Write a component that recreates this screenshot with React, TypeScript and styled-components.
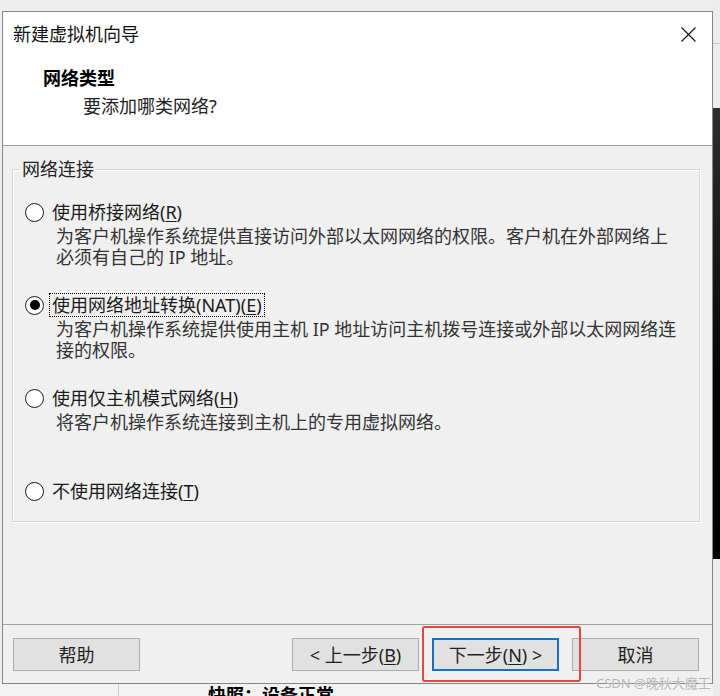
import React from "react";
import styled, { createGlobalStyle } from "styled-components";

const GlobalStyle = createGlobalStyle`
  html, body {
    margin: 0;
    padding: 0;
    width: 720px;
    height: 696px;
    overflow: hidden;
    background: #eeeeee;
  }
  body {
    font-family: "Noto Sans", "Noto Sans CJK SC", sans-serif;
    color: #1f1f1f;
  }
`;

const Page = styled.div`
  position: relative;
  width: 720px;
  height: 696px;
  overflow: hidden;
  display: flex;
  background: #eeeeee;
`;

const Stage = styled.div`
  width: 713px;
  height: 696px;
  display: flex;
  flex-direction: column;
  padding: 11px 0 0 2px;
  box-sizing: border-box;
  overflow: hidden;
`;

const Window = styled.div`
  flex: none;
  width: 711px;
  height: 673px;
  box-sizing: border-box;
  border: 1px solid #868686;
  display: flex;
  flex-direction: column;
  background: #f0f0f0;
`;

const Header = styled.div`
  flex: none;
  height: 134px;
  box-sizing: border-box;
  background: #ffffff;
  border-bottom: 1px solid #a0a0a0;
  display: flex;
  flex-direction: column;
`;

const TitleBar = styled.div`
  height: 44px;
  display: flex;
  align-items: center;
  justify-content: space-between;
  padding: 0 16px 0 10px;
`;

const TitleText = styled.span`
  font-size: 18px;
  line-height: 24px;
  color: #111;
`;

const CloseIcon = styled.svg`
  width: 15px;
  height: 15px;
  display: block;
`;

const StepTitle = styled.div`
  margin-top: 10px;
  padding-left: 40px;
  font-size: 18px;
  line-height: 24px;
  font-weight: 700;
  color: #000;
`;

const StepSubtitle = styled.div`
  margin-top: 4px;
  padding-left: 80px;
  font-size: 18px;
  line-height: 24px;
  color: #222;
`;

const Body = styled.div`
  flex: 1;
  min-height: 0;
  padding: 11px 12px 0 9px;
  background: #f0f0f0;
`;

const GroupBox = styled.fieldset`
  margin: 0;
  padding: 19px 0 18px 12px;
  border: 1px solid #d6d6d6;
  box-shadow: inset 1px 1px 0 #ffffff, 1px 1px 0 #ffffff;
  min-width: 0;
`;

const Legend = styled.legend`
  margin-left: -5px;
  padding: 0 2px;
  font-size: 18px;
  line-height: 24px;
  color: #222;
`;

const Option = styled.div<{ $last?: boolean }>`
  height: ${(p) => (p.$last ? "24px" : "93px")};
  display: flex;
  flex-direction: column;
`;

const OptionRow = styled.div`
  height: 24px;
  display: flex;
  align-items: center;
  gap: 5px;
`;

const Radio = styled.span<{ $checked?: boolean }>`
  width: 19px;
  height: 19px;
  box-sizing: border-box;
  border-radius: 50%;
  border: 1px solid #1c1c1c;
  background: #ffffff;
  display: flex;
  align-items: center;
  justify-content: center;
  &::after {
    content: "";
    width: 10px;
    height: 10px;
    border-radius: 50%;
    background: ${(p) => (p.$checked ? "#000" : "transparent")};
  }
`;

const Label = styled.span<{ $focused?: boolean }>`
  border: 1px ${(p) => (p.$focused ? "dotted #000" : "solid transparent")};
  padding: 0 2px;
  font-size: 18px;
  line-height: 22px;
  color: #1a1a1a;
  white-space: nowrap;
`;

const Mnemonic = styled.u`
  text-decoration: underline;
  text-underline-offset: 2px;
  text-decoration-thickness: 1px;
`;

const Desc = styled.div`
  margin-top: 2px;
  padding-left: 31px;
  display: flex;
  flex-direction: column;
`;

const DescLine = styled.span`
  font-size: 18px;
  line-height: 21px;
  color: #333;
  white-space: nowrap;
`;

const Footer = styled.div`
  flex: none;
  height: 59px;
  box-sizing: border-box;
  border-top: 1px solid #a0a0a0;
  padding: 13px 13px 0 10px;
  display: flex;
  justify-content: space-between;
  align-items: flex-start;
  background: #f0f0f0;
`;

const ButtonGroup = styled.div`
  display: flex;
  gap: 13px;
`;

const Button = styled.button<{ $primary?: boolean }>`
  width: 127px;
  height: 33px;
  box-sizing: border-box;
  margin: 0;
  padding: 0;
  background: #e1e1e1;
  border: ${(p) => (p.$primary ? "2px solid #1b6fc2" : "1px solid #adadad")};
  font-family: "Noto Sans", "Noto Sans CJK SC", sans-serif;
  font-size: 18px;
  line-height: 24px;
  color: #1f1f1f;
  display: flex;
  align-items: center;
  justify-content: center;
  white-space: nowrap;
`;

const Highlight = styled.span`
  position: relative;
  display: flex;
`;

const HighlightFrame = styled.span`
  position: absolute;
  left: -10px;
  top: -12px;
  right: -22px;
  bottom: -11px;
  border: 2px solid #e8463b;
  border-radius: 3px;
  pointer-events: none;
`;

const BottomBar = styled.div`
  flex: 1;
  min-height: 0;
  display: flex;
  margin-left: -2px;
  background: #f3f3f3;
`;

const BottomCell = styled.div`
  width: 119px;
  box-sizing: border-box;
  border-right: 1px solid #cfcfcf;
`;

const BottomText = styled.div`
  padding-left: 89px;
  margin-top: -1px;
  font-size: 18px;
  line-height: 24px;
  font-weight: 700;
  color: #000;
  white-space: nowrap;
`;

const Strip = styled.div`
  width: 7px;
  display: flex;
  flex-direction: column;
`;

const StripPart = styled.div<{ $h?: number; $dark?: boolean; $line?: boolean }>`
  height: ${(p) => (p.$h ? `${p.$h}px` : "auto")};
  flex: ${(p) => (p.$h ? "none" : "1")};
  background: ${(p) =>
    p.$dark ? "linear-gradient(#2e2e2e 0%, #1a1a1a 30%, #050505 60%, #000 100%)" : "#ececec"};
  border-bottom: ${(p) => (p.$line ? "1px solid #c8c8c8" : "none")};
`;

const Watermark = styled.div`
  position: absolute;
  left: 596px;
  top: 674px;
  font-family: "Noto Sans", "Noto Sans CJK SC", sans-serif;
  font-size: 13px;
  line-height: 18px;
  color: #b4b4b4;
  text-shadow: 0 0 1px #ffffff;
  white-space: nowrap;
  pointer-events: none;
`;

type Opt = {
  label: string;
  key: string;
  tail?: string;
  desc: string[];
  checked?: boolean;
};

const options: Opt[] = [
  {
    label: "使用桥接网络(",
    key: "R",
    tail: ")",
    desc: [
      "为客户机操作系统提供直接访问外部以太网网络的权限。客户机在外部网络上",
      "必须有自己的 IP 地址。",
    ],
  },
  {
    label: "使用网络地址转换(NAT)(",
    key: "E",
    tail: ")",
    desc: [
      "为客户机操作系统提供使用主机 IP 地址访问主机拨号连接或外部以太网网络连",
      "接的权限。",
    ],
    checked: true,
  },
  {
    label: "使用仅主机模式网络(",
    key: "H",
    tail: ")",
    desc: ["将客户机操作系统连接到主机上的专用虚拟网络。"],
  },
  {
    label: "不使用网络连接(",
    key: "T",
    tail: ")",
    desc: [],
  },
];

export default function App() {
  return (
    <>
      <GlobalStyle />
      <Page>
        <Stage>
          <Window>
            <Header>
              <TitleBar>
                <TitleText>新建虚拟机向导</TitleText>
                <CloseIcon viewBox="0 0 15 15">
                  <path d="M0.5 0.5 L14.5 14.5 M14.5 0.5 L0.5 14.5" stroke="#111" strokeWidth="1.1" fill="none" />
                </CloseIcon>
              </TitleBar>
              <StepTitle>网络类型</StepTitle>
              <StepSubtitle>要添加哪类网络?</StepSubtitle>
            </Header>
            <Body>
              <GroupBox>
                <Legend>网络连接</Legend>
                {options.map((o, i) => (
                  <Option key={o.key} $last={i === options.length - 1}>
                    <OptionRow>
                      <Radio $checked={o.checked} />
                      <Label $focused={o.checked}>
                        {o.label}
                        <Mnemonic>{o.key}</Mnemonic>
                        {o.tail}
                      </Label>
                    </OptionRow>
                    {o.desc.length > 0 && (
                      <Desc>
                        {o.desc.map((d) => (
                          <DescLine key={d}>{d}</DescLine>
                        ))}
                      </Desc>
                    )}
                  </Option>
                ))}
              </GroupBox>
            </Body>
            <Footer>
              <Button>帮助</Button>
              <ButtonGroup>
                <Button>
                  &lt; 上一步(<Mnemonic>B</Mnemonic>)
                </Button>
                <Highlight>
                  <Button $primary>
                    下一步(<Mnemonic>N</Mnemonic>) &gt;
                  </Button>
                  <HighlightFrame />
                </Highlight>
                <Button>取消</Button>
              </ButtonGroup>
            </Footer>
          </Window>
          <BottomBar>
            <BottomCell />
            <BottomText>快照：设备正常</BottomText>
          </BottomBar>
        </Stage>
        <Strip>
          <StripPart $h={43} $line />
          <StripPart $h={64} />
          <StripPart $h={451} $dark />
          <StripPart />
        </Strip>
        <Watermark>CSDN @晚秋大魔王</Watermark>
      </Page>
    </>
  );
}
